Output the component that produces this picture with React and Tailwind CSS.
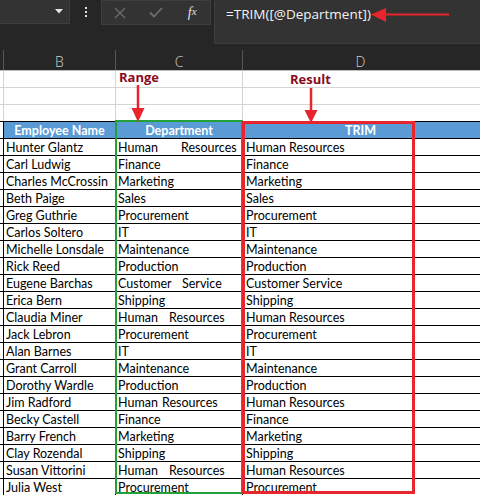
import React from "react";

const rows = [
  ["Hunter Glantz", ["Human", "Resources", 63], "Human Resources"],
  ["Carl Ludwig", "Finance", "Finance"],
  ["Charles McCrossin", "Marketing", "Marketing"],
  ["Beth Paige", "Sales", "Sales"],
  ["Greg Guthrie", "Procurement", "Procurement"],
  ["Carlos Soltero", "IT", "IT"],
  ["Michelle Lonsdale", "Maintenance", "Maintenance"],
  ["Rick Reed", "Production", "Production"],
  ["Eugene Barchas", ["Customer", "Service", 64], "Customer Service"],
  ["Erica Bern", "Shipping", "Shipping"],
  ["Claudia Miner", ["Human", "Resources", 51], "Human Resources"],
  ["Jack Lebron", "Procurement", "Procurement"],
  ["Alan Barnes", "IT", "IT"],
  ["Grant Carroll", "Maintenance", "Maintenance"],
  ["Dorothy Wardle", "Production", "Production"],
  ["Jim Radford", ["Human", "Resources", 44], "Human Resources"],
  ["Becky Castell", "Finance", "Finance"],
  ["Barry French", "Marketing", "Marketing"],
  ["Clay Rozendal", "Shipping", "Shipping"],
  ["Susan Vittorini", ["Human", "Resources", 51], "Human Resources"],
  ["Julia West", "Procurement", "Procurement"],
];

function Dept({ v }) {
  if (typeof v === "string") return <span>{v}</span>;
  return (
    <span className="flex">
      <span className="inline-block" style={{ width: v[2] }}>{v[0]}</span>
      <span>{v[1]}</span>
    </span>
  );
}

export default function App() {
  return (
    <div className="relative w-[480px] h-[495px] overflow-hidden bg-white font-['Lato',sans-serif]">
      {/* top bar */}
      <div className="h-[50px] bg-[#262626] flex items-start">
        <div className="w-[70px] h-[24px] bg-[#333333] border-r border-b border-[#3e3e3e] flex items-center justify-end pr-[6px]">
          <svg width="8" height="5" viewBox="0 0 8 5"><path d="M0 0 L8 0 L4 4.5 Z" fill="#e6e6e6" /></svg>
        </div>
        <div className="w-[31px] h-[24px] flex items-center justify-center">
          <div className="flex flex-col gap-[2px]">
            <div className="w-[2px] h-[2px] bg-[#e0e0e0]" />
            <div className="w-[2px] h-[2px] bg-[#e0e0e0]" />
            <div className="w-[2px] h-[2px] bg-[#e0e0e0]" />
          </div>
        </div>
        <div className="w-[110px] h-[25px] bg-[#333333] border border-[#3e3e3e] flex items-center">
          <div className="w-[37px] flex justify-center">
            <svg width="12" height="12" viewBox="0 0 12 12"><path d="M1 1 L11 11 M11 1 L1 11" stroke="#6e6e6e" strokeWidth="1.4" /></svg>
          </div>
          <div className="w-[36px] flex justify-center">
            <svg width="14" height="11" viewBox="0 0 14 11"><path d="M1 5.5 L5 9.5 L13 1" stroke="#6e6e6e" strokeWidth="1.8" fill="none" /></svg>
          </div>
          <div className="w-[36px] flex justify-center text-[#e0e0e0] italic font-['Liberation_Serif',serif] text-[14px] leading-none">
            f<span className="text-[11px]">x</span>
          </div>
        </div>
        <div className="ml-[3px] flex-1 h-[44px] bg-[#333333] border-l border-b border-[#3e3e3e] pl-[11px] pt-[4px] text-[#f2f2f2] text-[13.5px] leading-[20px] font-['Open_Sans',sans-serif]">
          =TRIM([@Department])
        </div>
      </div>

      {/* column headers */}
      <div className="h-[21px] bg-[#262626] flex border-b border-[#bdbdbd] text-[#cfcfcf] text-[14px] font-['Open_Sans',sans-serif] font-light">
        <div className="w-[4px] border-r border-[#555]" />
        <div className="w-[112px] border-r border-[#555] flex justify-center items-center pt-[3px]">B</div>
        <div className="w-[127px] border-r border-[#555] flex justify-center items-center pt-[3px]">C</div>
        <div className="flex-1 flex justify-center items-center pt-[3px] pr-[2px]">D</div>
      </div>

      {/* empty rows */}
      {[0, 1, 2].map((i) => (
        <div key={i} className={`h-[17px] flex border-b ${i === 2 ? "border-black" : "border-[#d4d4d4]"}`}>
          <div className="w-[4px] border-r border-[#d4d4d4]" />
          <div className="w-[112px] border-r border-[#d4d4d4]" />
          <div className="w-[127px] border-r border-[#d4d4d4]" />
          <div className="flex-1" />
        </div>
      ))}

      {/* table header */}
      <div className="h-[17px] flex border-b border-black text-white font-bold text-[12.5px] leading-[17px]">
        <div className="w-[4px] border-r border-black" />
        <div className="w-[112px] bg-[#5b9bd5] border-r border-black text-center">Employee Name</div>
        <div className="w-[127px] bg-[#5b9bd5] border-r border-black text-center">Department</div>
        <div className="flex-1 bg-[#5b9bd5] text-center pr-[2px]">TRIM</div>
      </div>

      {rows.map((r, i) => (
        <div key={i} className="h-[17px] flex border-b border-black text-black text-[12.5px] leading-[15px]">
          <div className="w-[4px] border-r border-black" />
          <div className="w-[112px] border-r border-black pl-[2px] pt-[1px] whitespace-nowrap overflow-hidden">{r[0]}</div>
          <div className="w-[127px] border-r border-black pl-[2px] pt-[1px] whitespace-nowrap overflow-hidden"><Dept v={r[1]} /></div>
          <div className="flex-1 pl-[3px] pt-[1px] whitespace-nowrap">{r[2]}</div>
        </div>
      ))}

      {/* annotations */}
      <div className="absolute left-[115px] top-[120px] w-[128px] h-[374px] border-2 border-[#22a03a]" />
      <div className="absolute left-[242px] top-[121px] w-[173px] h-[373px] border-[3px] border-[#e8242c]" />

      <div className="absolute left-[119px] top-[68px] text-[13px] font-bold text-[#8b0a1c] font-['Open_Sans',sans-serif]">Range</div>
      <div className="absolute left-[290px] top-[70px] text-[13px] font-bold text-[#8b0a1c] font-['Open_Sans',sans-serif]">Result</div>

      <svg className="absolute left-0 top-0" width="480" height="495" viewBox="0 0 480 495">
        <line x1="138" y1="85" x2="138" y2="110" stroke="#e8242c" strokeWidth="2.5" />
        <path d="M131.5 108 L144.5 108 L138 122 Z" fill="#e8242c" />
        <line x1="311" y1="88" x2="311" y2="112" stroke="#e8242c" strokeWidth="2.5" />
        <path d="M304.5 110 L317.5 110 L311 123 Z" fill="#e8242c" />
        <line x1="383" y1="14.5" x2="449" y2="14.5" stroke="#e8242c" strokeWidth="2" />
        <path d="M386 8 L386 22 L371 14.5 Z" fill="#e8242c" />
      </svg>
    </div>
  );
}
